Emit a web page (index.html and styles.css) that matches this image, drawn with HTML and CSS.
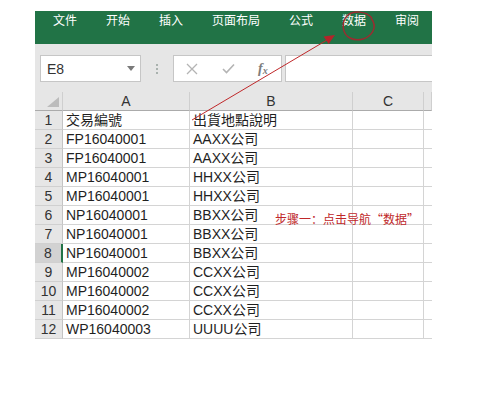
FILE: index.html
```html
<!DOCTYPE html>
<html lang="zh">
<head>
<meta charset="utf-8">
<link rel="stylesheet" href="styles.css">
</head>
<body>
<div class="app">
  <div class="ribbon">
    <span class="tab">文件</span>
    <span class="tab">开始</span>
    <span class="tab">插入</span>
    <span class="tab">页面布局</span>
    <span class="tab">公式</span>
    <span class="tab">数据</span>
    <span class="tab">审阅</span>
  </div>
  <div class="fbar">
    <div class="namebox">
      <span class="name">E8</span>
      <svg class="caret" width="8" height="5" viewBox="0 0 8 5"><path d="M0 0H8L4 5Z" fill="#7a7a7a"/></svg>
    </div>
    <div class="dots"><i></i><i></i><i></i></div>
    <div class="fbtns">
      <svg width="12" height="12" viewBox="0 0 12 12"><path d="M1 1L11 11M11 1L1 11" stroke="#b4b4b4" stroke-width="1.3" fill="none"/></svg>
      <svg width="13" height="11" viewBox="0 0 13 11"><path d="M1 6L4.5 9.5L12 1.5" stroke="#b4b4b4" stroke-width="1.6" fill="none"/></svg>
      <span class="fx">f<sub>x</sub></span>
    </div>
    <div class="finput"></div>
  </div>
  <div class="grid">
    <div class="ch corner"><svg width="12" height="10" viewBox="0 0 12 10"><path d="M12 0V10H0Z" fill="#bcbcbc"/></svg></div>
    <div class="ch">A</div><div class="ch">B</div><div class="ch">C</div><div class="ch last"></div>

    <div class="rh">1</div><div class="c">交易編號</div><div class="c">出貨地點說明</div><div class="c"></div><div class="c last"></div>
    <div class="rh">2</div><div class="c">FP16040001</div><div class="c">AAXX公司</div><div class="c"></div><div class="c last"></div>
    <div class="rh">3</div><div class="c">FP16040001</div><div class="c">AAXX公司</div><div class="c"></div><div class="c last"></div>
    <div class="rh">4</div><div class="c">MP16040001</div><div class="c">HHXX公司</div><div class="c"></div><div class="c last"></div>
    <div class="rh">5</div><div class="c">MP16040001</div><div class="c">HHXX公司</div><div class="c"></div><div class="c last"></div>
    <div class="rh">6</div><div class="c">NP16040001</div><div class="c">BBXX公司</div><div class="c"></div><div class="c last"></div>
    <div class="rh">7</div><div class="c">NP16040001</div><div class="c">BBXX公司</div><div class="c"></div><div class="c last"></div>
    <div class="rh active">8</div><div class="c">NP16040001</div><div class="c">BBXX公司</div><div class="c"></div><div class="c last"></div>
    <div class="rh">9</div><div class="c">MP16040002</div><div class="c">CCXX公司</div><div class="c"></div><div class="c last"></div>
    <div class="rh">10</div><div class="c">MP16040002</div><div class="c">CCXX公司</div><div class="c"></div><div class="c last"></div>
    <div class="rh">11</div><div class="c">MP16040002</div><div class="c">CCXX公司</div><div class="c"></div><div class="c last"></div>
    <div class="rh">12</div><div class="c">WP16040003</div><div class="c">UUUU公司</div><div class="c"></div><div class="c last"></div>
  </div>
</div>
<div class="note">步骤一：点击导航“数据”</div>
<svg class="overlay" width="488" height="408" viewBox="0 0 488 408">
  <line x1="192" y1="120" x2="327" y2="40" stroke="#c0282a" stroke-width="1"/>
  <path d="M335 35L328.6 44L323.6 36.5Z" fill="#b3242a"/>
  <path d="M372 18C366 11 353 10 347 16C341 22 342 34 350 38C358 42 369 39 373 31C375 27 374 22 371 18" stroke="#9c2b30" stroke-width="1.5" fill="none"/>
</svg>
</body>
</html>
```
FILE: styles.css
```css
html, body {
  margin: 0;
  padding: 0;
  background: #ffffff;
}
body {
  position: relative;
  width: 488px;
  height: 408px;
  overflow: hidden;
  font-family: "Liberation Sans", "Noto Sans CJK TC", sans-serif;
}
.app {
  margin: 11px 0 0 35px;
  width: 397px;
}
.ribbon {
  height: 33px;
  background: #217346;
  display: flex;
  gap: 29px;
  padding-left: 18px;
  box-sizing: border-box;
}
.tab {
  color: #ffffff;
  font-family: "Noto Sans CJK SC", sans-serif;
  font-size: 12px;
  line-height: 18px;
  padding-top: 0px;
}
.fbar {
  height: 48px;
  background: #e6e6e6;
  display: flex;
  align-items: flex-start;
  padding-top: 11px;
  box-sizing: border-box;
}
.namebox {
  margin-left: 5px;
  width: 101px;
  height: 27px;
  box-sizing: border-box;
  background: #fff;
  border: 1px solid #c6c6c6;
  display: flex;
  align-items: center;
  justify-content: space-between;
  padding: 0 5px 0 6px;
}
.name {
  font-size: 14px;
  color: #333;
}
.dots {
  width: 32px;
  height: 27px;
  display: flex;
  flex-direction: column;
  align-items: center;
  justify-content: center;
  gap: 2px;
}
.dots i {
  width: 2px;
  height: 2px;
  background: #a9b2ae;
  display: block;
}
.fbtns {
  width: 109px;
  height: 27px;
  box-sizing: border-box;
  background: #fff;
  border: 1px solid #c6c6c6;
  display: flex;
  align-items: center;
  padding-left: 12px;
  gap: 24px;
}
.fx {
  font-family: "Liberation Serif", serif;
  font-style: italic;
  font-size: 14px;
  color: #7d7d7d;
  font-weight: bold;
  margin-left: -1px;
}
.fx sub {
  font-size: 10px;
  vertical-align: -1px;
}
.finput {
  margin-left: 3px;
  flex: 1;
  height: 27px;
  box-sizing: border-box;
  background: #fff;
  border: 1px solid #c6c6c6;
  border-right: none;
}
.grid {
  display: grid;
  grid-template-columns: 28px 127px 163px 71px 8px;
  grid-auto-rows: 19px;
}
.grid > div {
  box-sizing: border-box;
  border-right: 1px solid #d4d4d4;
  border-bottom: 1px solid #d4d4d4;
  font-size: 14px;
  line-height: 18px;
  white-space: nowrap;
  overflow: hidden;
  color: #1f1f1f;
}
.grid > .last {
  border-right: none;
}
.grid > .ch {
  background: #e6e6e6;
  text-align: center;
  color: #333;
  border-bottom: 1px solid #ababab;
  border-right: 1px solid #cfcfcf;
}
.grid > .corner {
  display: flex;
  align-items: flex-end;
  justify-content: flex-end;
  padding: 0 3px 3px 0;
}
.grid > .rh {
  background: #e6e6e6;
  text-align: center;
  color: #333;
  border-right: 1px solid #c4c4c4;
  border-bottom: 1px solid #d0d0d0;
}
.grid > .rh.active {
  background: #d2d2d2;
  border-right: 2px solid #217346;
}
.grid > .c {
  padding-left: 3px;
}
.note {
  position: absolute;
  left: 275px;
  top: 211px;
  font-family: "Noto Sans CJK SC", sans-serif;
  font-size: 12px;
  line-height: 16px;
  color: #c0282a;
}
.overlay {
  position: absolute;
  left: 0;
  top: 0;
  pointer-events: none;
}
```
